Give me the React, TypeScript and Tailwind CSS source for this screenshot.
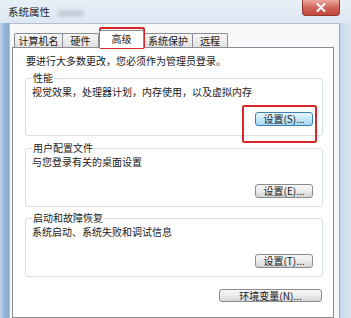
import React from "react"

const font = "font-['Noto_Sans_CJK_SC','Noto_Sans',sans-serif]"

function Tab({ label, w, selected }: { label: string; w: string; selected?: boolean }) {
  if (selected) {
    return (
      <div
        className={`relative z-10 -mb-px flex h-[18px] ${w} items-start justify-center rounded-t-[2px] border border-b-0 border-[#898c95] bg-white pt-[2px] text-[10px] leading-[12px]`}
      >
        {label}
      </div>
    )
  }
  return (
    <div
      className={`-ml-px flex h-[14px] ${w} items-center justify-center rounded-t-[2px] border border-b-0 border-[#898c95] bg-linear-to-b from-[#f6f6f6] to-[#e1e1e1] text-[10px] leading-[12px] first:ml-0`}
    >
      {label}
    </div>
  )
}

function Btn({ label, w, h = "h-[14px]", focus }: { label: string; w: string; h?: string; focus?: boolean }) {
  return (
    <div
      className={cn(
        "flex items-center justify-center rounded-[3px] border text-[10px] leading-none text-[#1a1a1a]",
        w,
        h,
        focus
          ? "border-[#3c7fb1] bg-linear-to-b from-[#eaf6fd] via-[#c4e7fb] to-[#a7d9f5]"
          : "border-[#8a8a8a] bg-linear-to-b from-[#f6f6f6] via-[#ececec] to-[#d5d5d5]"
      )}
    >
      {label}
    </div>
  )
}

function cn(...c: (string | false | undefined)[]) {
  return c.filter(Boolean).join(" ")
}

function Group({
  title,
  desc,
  button,
  cls,
}: {
  title: string
  desc: string
  button: React.ReactNode
  cls: string
}) {
  return (
    <fieldset className={cn("rounded-[3px] border border-[#d5dfe5] pl-[6px] pr-[9px]", cls)}>
      <legend className="px-[1px] text-[10px] leading-[12px]">{title}</legend>
      <div className="text-[10px] leading-[16px]">{desc}</div>
      {button}
    </fieldset>
  )
}

export default function App() {
  return (
    <div
      className={`relative flex h-[318px] w-[351px] flex-col overflow-hidden bg-[#d4e2f1] text-[#1a1a1a] ${font}`}
    >
      {/* title bar */}
      <div className="flex h-[23px] shrink-0 bg-linear-to-b from-[#e8eff7] to-[#dde8f4]">
        <div className="flex items-center pl-[8px] pt-[2px] text-[10.5px] leading-none text-[#1e1e1e]">
          系统属性
        </div>
        <div className="ml-[8px] mt-[11px] h-[5px] w-[26px] rounded-full bg-[#b9c1cb] blur-[2px]" />
        <div className="ml-auto mr-[11px] flex h-[16px] w-[38px] items-center justify-center rounded-b-[4px] border border-t-0 border-[#8e3a33] bg-linear-to-b from-[#e9a89f] via-[#d0665b] to-[#c2463b]">
          <svg width="10" height="9" viewBox="0 0 10 9">
            <path d="M1.5 1 L8.5 8 M8.5 1 L1.5 8" stroke="#fff" strokeWidth="2" strokeLinecap="round" />
          </svg>
        </div>
      </div>

      {/* body */}
      <div className="flex min-h-0 flex-1">
        <div className="w-[9px] shrink-0 bg-linear-to-r from-[#c4d7ed] via-[#93b3d9] to-[#8aa9cf]" />
        <div className="flex w-[330px] shrink-0 flex-col border-l border-t border-[#b9bccb] bg-[#f7f8fa] pl-[2px] pr-[5px] pt-[6px]">
          {/* tabs */}
          <div className="flex h-[17px] items-end pl-[2px]">
            <Tab label="计算机名" w="w-[49px]" />
            <Tab label="硬件" w="w-[37px]" />
            <Tab label="高级" w="w-[45px]" selected />
            <Tab label="系统保护" w="w-[50px]" />
            <Tab label="远程" w="w-[36px]" />
          </div>

          {/* panel */}
          <div className="flex flex-1 flex-col border border-[#898c95] bg-white pl-[12px] pr-[10px] pt-[5px]">
            <div className="pl-[1px] text-[10px] leading-[15px]">要进行大多数更改，您必须作为管理员登录。</div>

            <Group
              title="性能"
              desc="视觉效果，处理器计划，内存使用，以及虚拟内存"
              cls="mt-[4px] pb-[9px]"
              button={
                <div className="mt-[12px] flex justify-end">
                  <Btn label="设置(S)..." w="w-[58px]" focus />
                </div>
              }
            />

            <Group
              title="用户配置文件"
              desc="与您登录有关的桌面设置"
              cls="mt-[6px] pb-[8px]"
              button={
                <div className="mt-[14px] flex justify-end">
                  <Btn label="设置(E)..." w="w-[58px]" />
                </div>
              }
            />

            <Group
              title="启动和故障恢复"
              desc="系统启动、系统失败和调试信息"
              cls="mt-[5px] pb-[8px]"
              button={
                <div className="mt-[14px] flex justify-end">
                  <Btn label="设置(T)..." w="w-[58px]" />
                </div>
              }
            />

            <div className="mt-[12px] flex justify-end pr-[1px]">
              <Btn label="环境变量(N)..." w="w-[103px]" h="h-[13px]" />
            </div>
          </div>
        </div>
        <div className="w-[12px] shrink-0 border-l border-[#8ea3c0] bg-linear-to-r from-[#c9daee] to-[#d9e5f2]" />
      </div>

      {/* red highlight marks */}
      <div className="absolute left-[99px] top-[27px] h-[22px] w-[46px] rounded-[2px] border-2 border-[#d8262b]" />
      <div className="absolute left-[242px] top-[105px] h-[38px] w-[75px] rounded-[2px] border-2 border-[#d8262b]" />
    </div>
  )
}
